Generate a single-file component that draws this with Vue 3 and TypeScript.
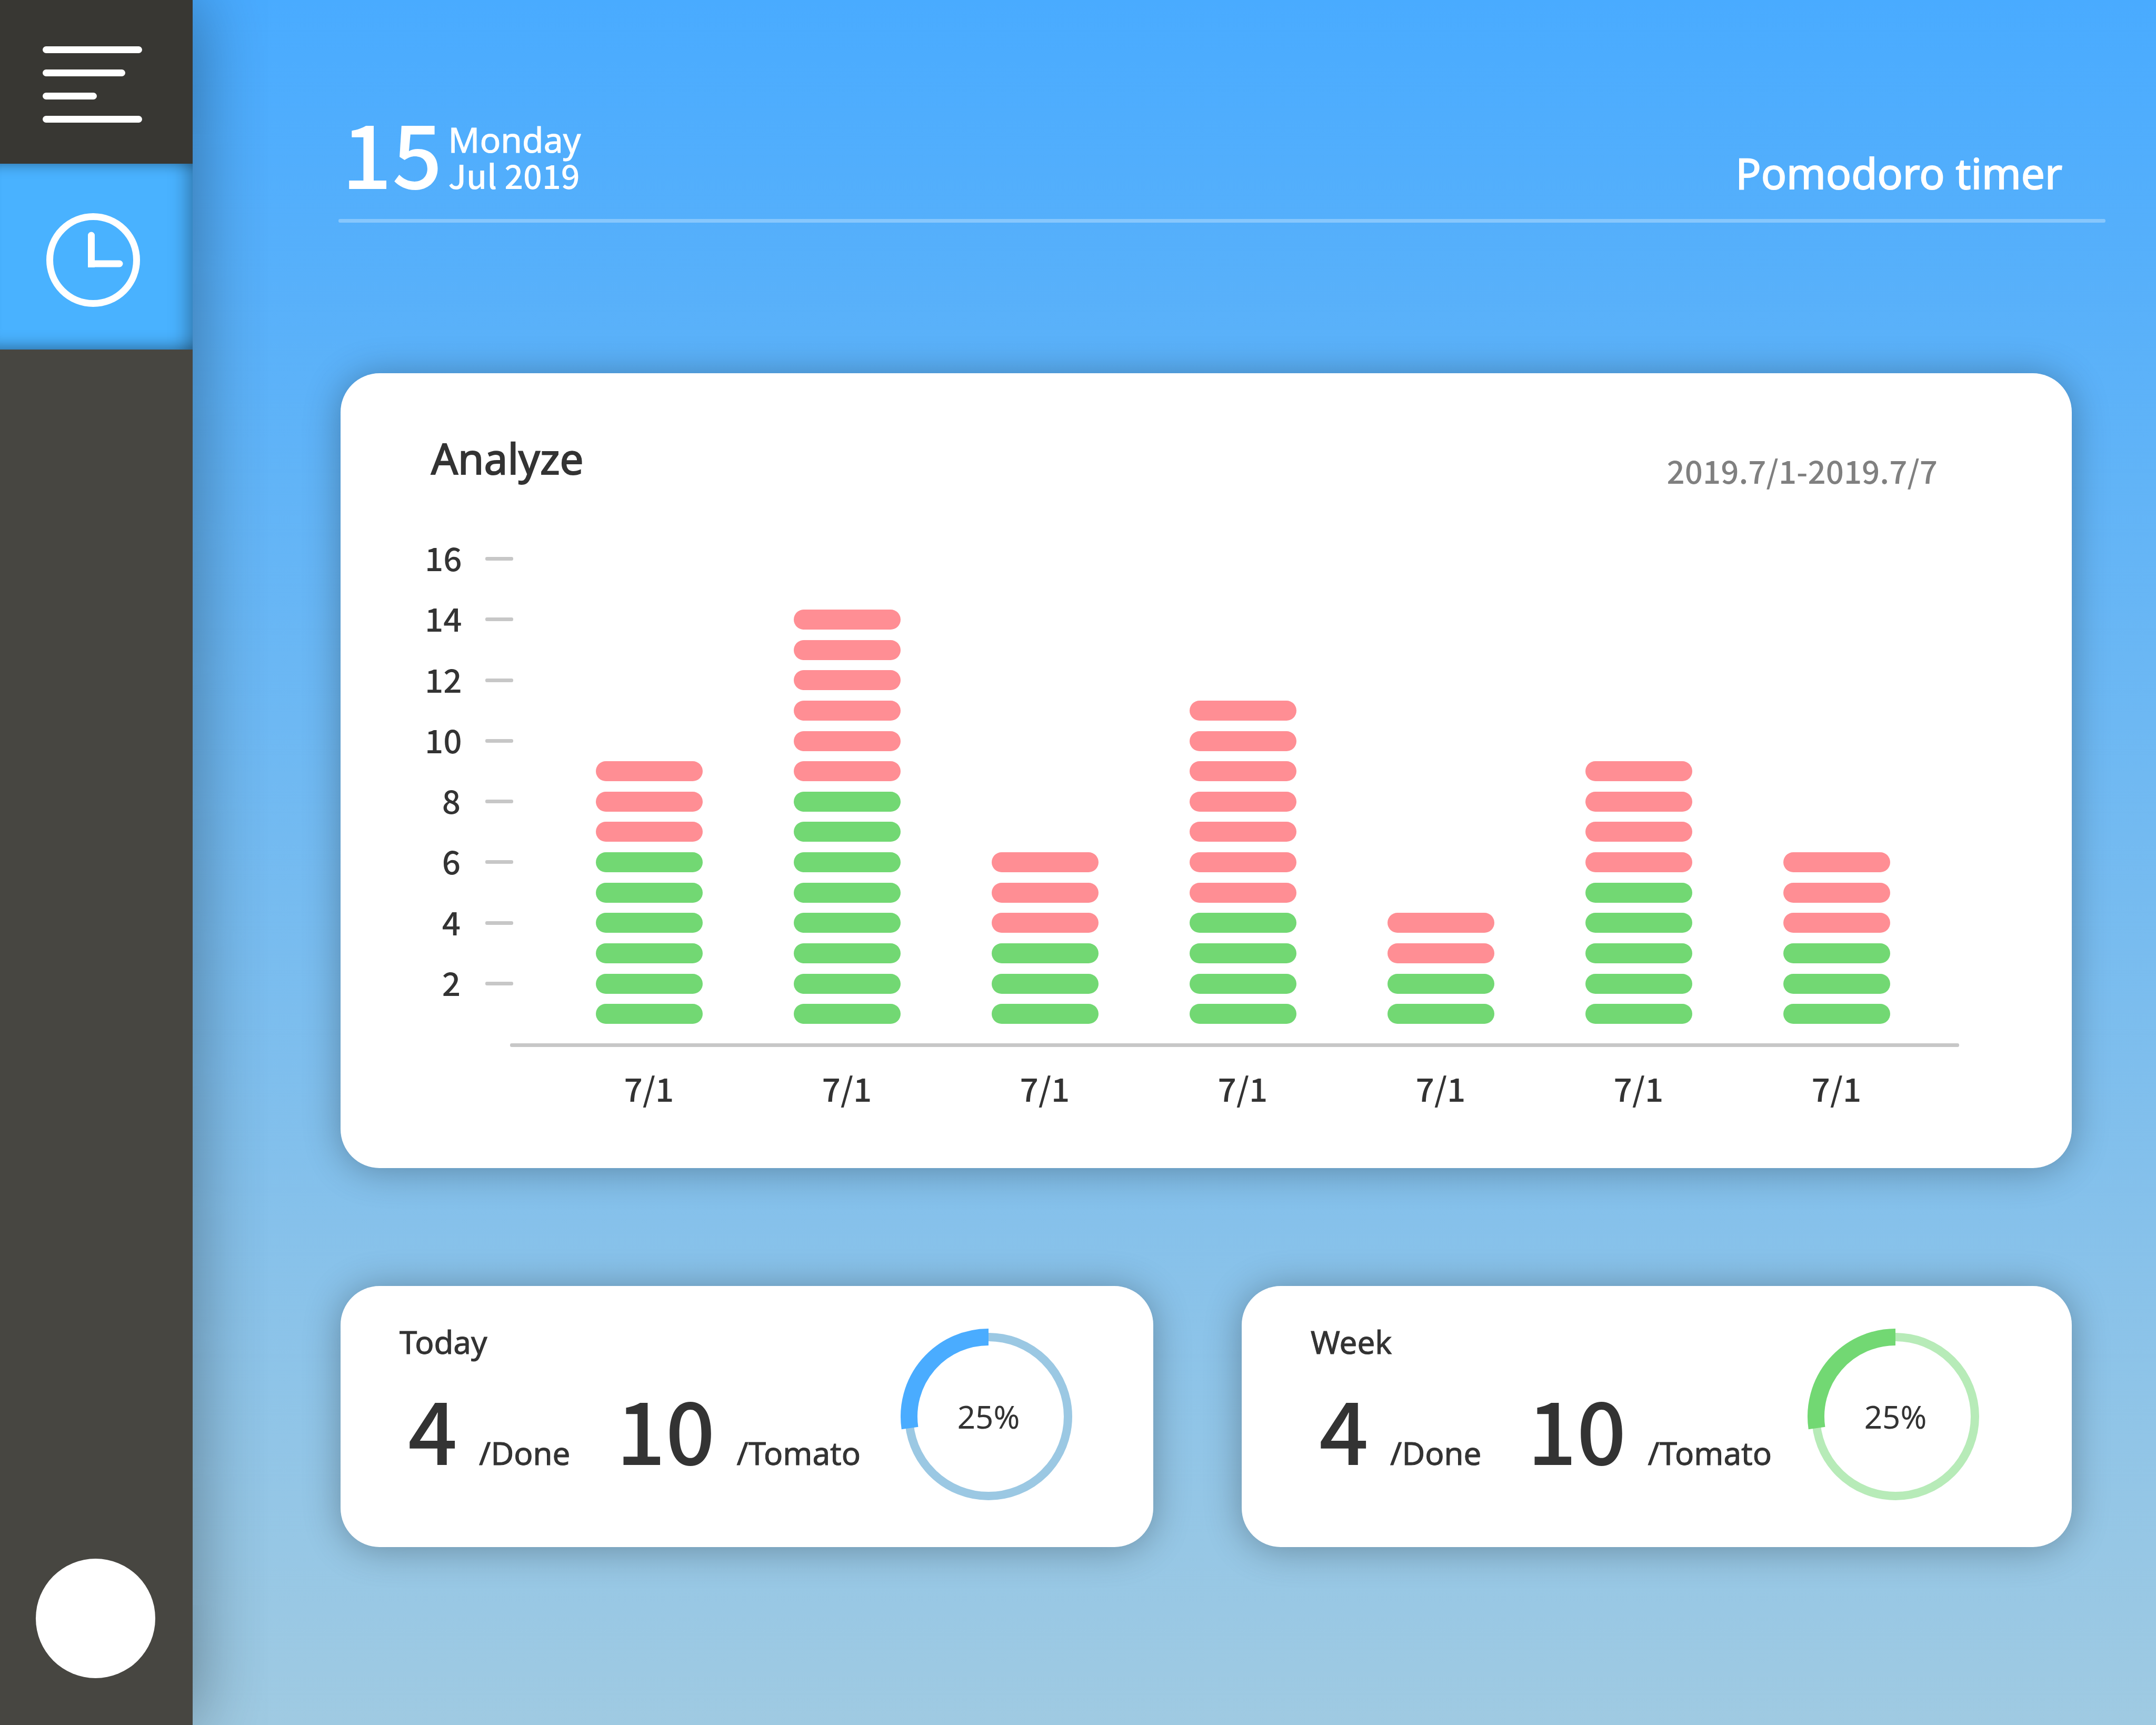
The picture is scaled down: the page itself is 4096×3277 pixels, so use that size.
<script setup lang="ts">
interface Day {
  label: string
  done: number
  total: number
}

interface Summary {
  id: string
  title: string
  done: number
  tomato: number
  percent: string
}

const ticks: number[] = [16, 14, 12, 10, 8, 6, 4, 2]

const days: Day[] = [
  { label: '7/1', done: 6, total: 9 },
  { label: '7/1', done: 8, total: 14 },
  { label: '7/1', done: 3, total: 6 },
  { label: '7/1', done: 4, total: 11 },
  { label: '7/1', done: 2, total: 4 },
  { label: '7/1', done: 5, total: 9 },
  { label: '7/1', done: 3, total: 6 },
]

const summaries: Summary[] = [
  { id: 'today', title: 'Today', done: 4, tomato: 10, percent: '25%' },
  { id: 'week', title: 'Week', done: 4, tomato: 10, percent: '25%' },
]
</script>

<template>
  <div class="app">
    <aside class="sidebar">
      <button class="menu" type="button" aria-label="Menu">
        <span class="bar"></span>
        <span class="bar medium"></span>
        <span class="bar short"></span>
        <span class="bar"></span>
      </button>
      <button class="nav" type="button" aria-label="Pomodoro timer">
        <svg class="clock" viewBox="0 0 178 178" aria-hidden="true">
          <circle cx="89" cy="89" r="82.5" />
          <path class="hand" d="M85.5 42V96H139" />
          <path class="corner" d="M79 90h13v13h-13z" />
        </svg>
      </button>
      <button class="avatar" type="button" aria-label="Profile"></button>
    </aside>

    <main class="main">
      <header class="header">
        <div class="date">
          <span class="day">15</span>
          <span class="month"><span class="line">Monday</span><span class="line num">Jul 2019</span></span>
        </div>
        <h1 class="heading">Pomodoro timer</h1>
      </header>
      <div class="rule"></div>

      <section class="card analyze">
        <div class="analyze-head">
          <h2 class="heading">Analyze</h2>
          <span class="range">2019.7/1-2019.7/7</span>
        </div>
        <div class="chart">
          <ul class="y-axis">
            <li v-for="t in ticks" :key="t">
              <span class="y-label">{{ t }}</span>
              <span class="tick"></span>
            </li>
          </ul>
          <div class="columns">
            <div v-for="(d, i) in days" :key="i" class="column">
              <span v-for="n in d.total" :key="n" class="slot">
                <span class="segment" :class="{ done: n <= d.done }"></span>
              </span>
            </div>
          </div>
        </div>
        <div class="x-line"></div>
        <ul class="x-axis">
          <li v-for="(d, i) in days" :key="i">{{ d.label }}</li>
        </ul>
      </section>

      <div class="summaries">
        <section v-for="s in summaries" :key="s.id" class="card summary" :class="s.id">
          <div class="info">
            <h3>{{ s.title }}</h3>
            <div class="stats">
              <span class="count">{{ s.done }}</span>
              <span class="unit">/Done</span>
              <span class="count second">{{ s.tomato }}</span>
              <span class="unit">/Tomato</span>
            </div>
          </div>
          <div class="ring">
            <svg viewBox="0 0 336 336" aria-hidden="true">
              <circle class="track" cx="168" cy="168" r="151" />
              <path class="arc" d="M168 17A151 151 0 0 0 18.6 190" />
            </svg>
            <span class="percent">{{ s.percent }}</span>
          </div>
        </section>
      </div>
    </main>
  </div>
</template>

<style>
body {
  margin: 0;
}
</style>

<style scoped>
.app {
  display: flex;
  min-height: 100vh;
  background: linear-gradient(#49abff, #9fcae2);
  color: #333;
  font-family: "Noto Sans", "Open Sans", sans-serif;
}

h1,
h2,
h3,
ul {
  margin: 0;
  padding: 0;
  font-weight: inherit;
  list-style: none;
}

button {
  border: 0;
  padding: 0;
}

/* Sidebar */
.sidebar {
  position: relative;
  z-index: 1;
  display: flex;
  flex-direction: column;
  flex: none;
  width: 366px;
  background: #474641;
  box-shadow: 0 0 140px rgba(0, 0, 0, 0.4);
}

.menu {
  display: flex;
  flex-direction: column;
  gap: 31px;
  height: 311px;
  padding: 88px 96px 0 81px;
  background: #383733;
}

.bar {
  width: 189px;
  height: 13px;
  border-radius: 7px;
  background: #fff;
}

.bar.medium {
  width: 157px;
}

.bar.short {
  width: 103px;
}

.nav {
  display: flex;
  align-items: center;
  height: 353px;
  padding-left: 88px;
  padding-top: 12px;
  background: #49b2ff;
  box-shadow:
    inset 0 28px 24px -26px rgba(0, 0, 0, 0.35),
    inset 0 -34px 28px -28px rgba(0, 0, 0, 0.35),
    inset -36px 0 36px -28px rgba(0, 0, 0, 0.35);
}

.clock {
  width: 178px;
  height: 178px;
  fill: none;
  stroke: #fff;
  stroke-width: 13;
}

.clock .hand {
  stroke-linecap: round;
}

.clock .corner {
  fill: #fff;
  stroke: none;
}

.avatar {
  width: 227px;
  height: 227px;
  margin: auto 0 89px 68px;
  border-radius: 50%;
  background: #fff;
}

/* Header */
.main {
  flex: 1;
  padding: 0 96px 0 277px;
}

.header {
  display: flex;
  justify-content: space-between;
  align-items: last baseline;
  padding: 215px 82px 40px 6px;
  color: #fff;
}

.date {
  display: flex;
  align-items: last baseline;
  gap: 11px;
}

.day,
.num,
.range,
.y-axis,
.x-axis,
.count {
  font-family: "Noto Sans CJK SC", "Noto Sans", sans-serif;
  font-weight: 500;
}

.day {
  font-size: 168px;
  line-height: 142px;
}

.month {
  font-size: 66px;
  line-height: 68px;
  -webkit-text-stroke: 1px;
}

.line {
  display: block;
}

.line.num {
  font-size: 63px;
  -webkit-text-stroke: 0;
}

.heading {
  font-size: 80px;
  line-height: 96px;
  -webkit-text-stroke: 2px;
}

.rule {
  height: 7px;
  border-radius: 3px;
  background: rgba(255, 255, 255, 0.3);
}

/* Cards */
.card {
  border-radius: 74px;
  background: #fff;
  box-shadow: 0 4px 70px rgba(0, 0, 0, 0.3);
}

.analyze {
  margin: 286px 64px 224px 4px;
  padding: 113px 0 122px;
}

.analyze-head {
  display: flex;
  justify-content: space-between;
  align-items: flex-end;
  padding: 0 255px 0 172px;
}

.range {
  color: #808080;
  font-size: 60px;
  line-height: 50px;
}

.chart {
  display: flex;
  gap: 70px;
  height: 922px;
  margin-top: 115px;
  padding: 0 259px 0 160px;
}

.y-axis {
  display: flex;
  flex-direction: column;
  width: 168px;
  font-size: 62px;
  line-height: 50px;
}

.y-axis li {
  display: flex;
  flex: 1;
  align-items: flex-start;
  justify-content: space-between;
}

.y-label {
  width: 68px;
  text-align: right;
}

.tick {
  width: 53px;
  height: 7px;
  margin-top: 25px;
  border-radius: 3px;
  background: #c7c7c7;
}

.columns {
  display: grid;
  grid-template-columns: repeat(7, 1fr);
  flex: 1;
}

.column {
  display: flex;
  flex-direction: column-reverse;
  align-items: center;
}

.slot {
  display: flex;
  align-items: center;
  height: calc(100% / 16);
}

.segment {
  width: 203px;
  height: 38px;
  border-radius: 19px;
  background: #ff8e94;
}

.segment.done {
  background: #72d873;
}

.x-line {
  height: 7px;
  margin: 27px 214px 0 322px;
  border-radius: 3px;
  background: #c7c7c7;
}

.x-axis {
  display: grid;
  grid-template-columns: repeat(7, 1fr);
  margin-top: 46px;
  padding: 0 259px 0 398px;
  font-size: 62px;
  line-height: 62px;
  text-align: center;
}

/* Summaries */
.summaries {
  display: grid;
  grid-template-columns: 1544fr 1577fr;
  gap: 168px;
  margin: 0 64px 0 4px;
}

.summary {
  display: flex;
  justify-content: space-between;
  font-size: 60px;
  line-height: 80px;
}

.today {
  padding: 66px 145px 80px 112px;
}

.week {
  padding: 66px 167px 80px 131px;
}

.summary h3,
.unit {
  font-size: 60px;
  -webkit-text-stroke: 1px;
}

.stats {
  display: flex;
  align-items: baseline;
  gap: 41px;
  margin-top: 40px;
  padding-left: 16px;
}

.count {
  font-size: 165px;
  line-height: 165px;
}

.second {
  margin-left: 46px;
}

.ring {
  display: grid;
  place-items: center;
  width: 336px;
  height: 336px;
  margin-top: 14px;
}

.ring svg,
.percent {
  grid-area: 1 / 1;
}

.ring svg {
  width: 336px;
  height: 336px;
  fill: none;
}

.track {
  stroke-width: 16;
}

.arc {
  stroke-width: 32;
}

.today .track {
  stroke: #9bc8e3;
}

.today .arc {
  stroke: #4aacff;
}

.week .track {
  stroke: #b7ebb8;
}

.week .arc {
  stroke: #72d873;
}
</style>
